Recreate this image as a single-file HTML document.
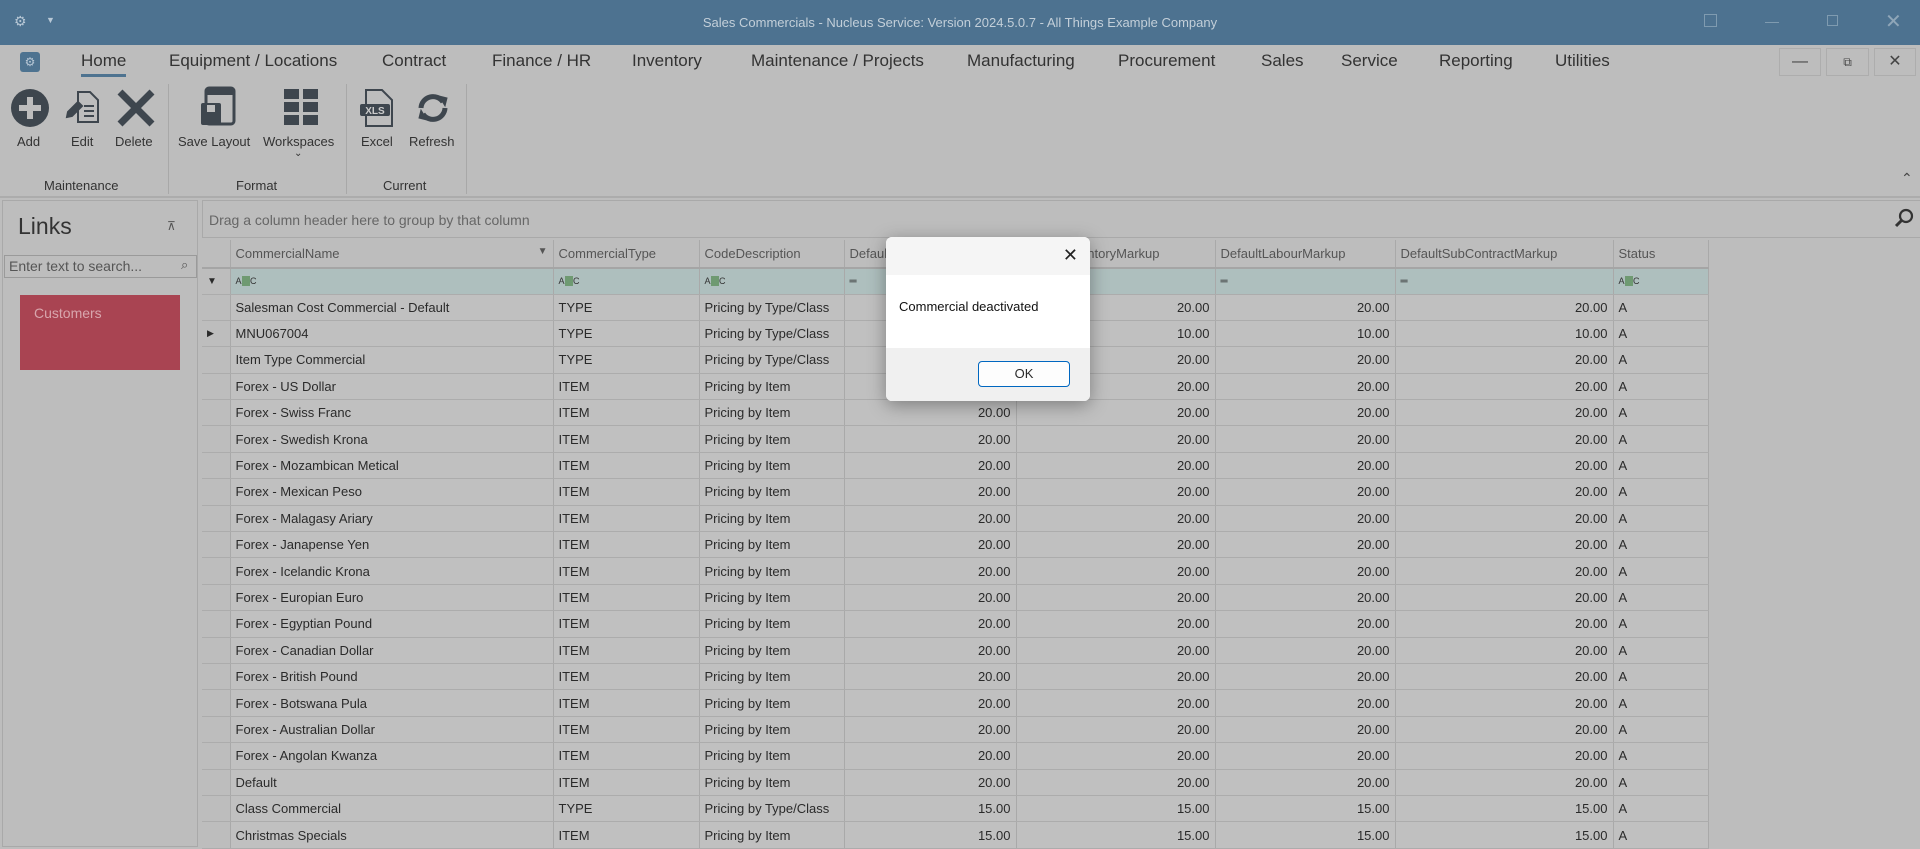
<!DOCTYPE html>
<html><head><meta charset="utf-8"><style>
*{box-sizing:border-box;margin:0;padding:0}
body{width:1920px;height:847px;overflow:hidden;background:#bdbdbd;font-family:"Liberation Sans",sans-serif;color:#2a2a2a;position:relative}
.abs{position:absolute}
.title{left:0;top:0;width:1920px;height:45px;background:#4d7290;color:#c3cfd9;font-size:13px;text-align:center;line-height:45px}
.tab{top:51px;font-size:17px;color:#333;white-space:nowrap}
.rb{font-size:13px;color:#333;text-align:center;white-space:nowrap}
.grp{top:178px;font-size:13px;color:#333}
.sep{width:1px;background:#a8a8a8;top:84px;height:110px}
table{border-collapse:collapse;position:absolute;left:202px;top:240px;font-size:13px}
td{height:26.4px;border-right:1px solid #a9a9a9;border-bottom:1px solid #acacac;padding:0 5px;white-space:nowrap;overflow:hidden;background:#c0c0c0}
tr.h td{height:28px;color:#555;background:#bdbdbd;border-bottom:2px solid #a5a5a5}
tr.f td{background:#aebfbe;height:26px;font-size:10px}
td.i{background:#bdbdbd;border-right:1px solid #a9a9a9}
td.n{text-align:right}
.abc{display:inline-block;font-size:9px;color:#333}
.abc b{background:#6f9a72;color:#6f9a72;padding:0 1px}
</style></head><body>
<div class="abs title">Sales Commercials - Nucleus Service: Version 2024.5.0.7 - All Things Example Company</div>
<div class="abs" style="left:14px;top:13px;color:#b8c8d6;font-size:14px">⚙</div>
<div class="abs" style="left:46px;top:15px;color:#b8c8d6;font-size:9px">▼</div>
<div class="abs" style="left:1704px;top:14px;width:13px;height:13px;border:1px solid #7f9bb0"></div>
<div class="abs" style="left:1765px;top:22px;width:14px;height:1px;background:#7f9bb0"></div>
<div class="abs" style="left:1827px;top:15px;width:11px;height:11px;border:1px solid #7f9bb0"></div>
<div class="abs" style="left:1885px;top:9px;color:#8fa6b8;font-size:20px">✕</div>
<div class="abs" style="left:20px;top:52px;width:20px;height:20px;background:#4e7390;border-radius:3px;color:#b8c8d6;font-size:12px;text-align:center;line-height:20px">⚙</div>
<div class="abs tab" style="left:81px">Home</div>
<div class="abs" style="left:81px;top:74px;width:45px;height:3px;background:#4e7390"></div>
<div class="abs tab" style="left:169px">Equipment / Locations</div>
<div class="abs tab" style="left:382px">Contract</div>
<div class="abs tab" style="left:492px">Finance / HR</div>
<div class="abs tab" style="left:632px">Inventory</div>
<div class="abs tab" style="left:751px">Maintenance / Projects</div>
<div class="abs tab" style="left:967px">Manufacturing</div>
<div class="abs tab" style="left:1118px">Procurement</div>
<div class="abs tab" style="left:1261px">Sales</div>
<div class="abs tab" style="left:1341px">Service</div>
<div class="abs tab" style="left:1439px">Reporting</div>
<div class="abs tab" style="left:1555px">Utilities</div>
<div class="abs" style="left:1779px;top:48px;width:42px;height:28px;border:1px solid #adadad;text-align:center;line-height:26px;color:#444">—</div>
<div class="abs" style="left:1826px;top:48px;width:43px;height:28px;border:1px solid #adadad;text-align:center;line-height:26px;color:#444;font-size:12px">⧉</div>
<div class="abs" style="left:1874px;top:48px;width:42px;height:28px;border:1px solid #adadad;text-align:center;line-height:26px;color:#444">✕</div>
<svg class="abs" style="left:10px;top:88px" width="40" height="40"><circle cx="20" cy="20" r="19" fill="#3e464e"/><rect x="17" y="9" width="6" height="22" fill="#bdbdbd"/><rect x="9" y="17" width="22" height="6" fill="#bdbdbd"/></svg>
<svg class="abs" style="left:64px;top:88px" width="40" height="40" fill="none" stroke="#3e464e" stroke-width="2"><path d="M14 4h12l8 8v22H14z"/><path d="M20 18h10M20 23h10M20 28h10"/><path d="M4 24l10-10 4 4-10 10-5 1z" fill="#3e464e"/></svg>
<svg class="abs" style="left:116px;top:88px" width="40" height="40"><path d="M4 4L36 36M36 4L4 36" stroke="#3e464e" stroke-width="7"/></svg>
<svg class="abs" style="left:198px;top:86px" width="40" height="42"><rect x="8" y="2" width="28" height="36" rx="3" fill="none" stroke="#3e464e" stroke-width="3"/><rect x="8" y="2" width="28" height="7" fill="#3e464e"/><rect x="3" y="17" width="20" height="22" rx="2" fill="#3e464e"/><rect x="9" y="19" width="8" height="7" fill="#bdbdbd"/></svg>
<svg class="abs" style="left:283px;top:88px" width="36" height="38" fill="#3e464e"><rect x="1" y="1" width="15" height="10"/><rect x="20" y="1" width="15" height="10"/><rect x="1" y="14" width="15" height="10"/><rect x="20" y="14" width="15" height="10"/><rect x="1" y="27" width="15" height="10"/><rect x="20" y="27" width="15" height="10"/></svg>
<svg class="abs" style="left:358px;top:88px" width="40" height="40"><path d="M8 2h16l10 10v26H8z" fill="none" stroke="#3e464e" stroke-width="2"/><rect x="2" y="16" width="30" height="12" rx="2" fill="#3e464e"/><text x="17" y="26" font-size="10" font-weight="bold" fill="#ccc" text-anchor="middle" font-family="Liberation Sans">XLS</text></svg>
<svg class="abs" style="left:413px;top:90px" width="40" height="36" fill="none" stroke="#3e464e" stroke-width="5"><path d="M8 18a12 12 0 0 1 22-6"/><path d="M32 18a12 12 0 0 1-22 6"/><path d="M26 6l8 2-2 8z" fill="#3e464e" stroke-width="1"/><path d="M14 30l-8-2 2-8z" fill="#3e464e" stroke-width="1"/></svg>
<div class="abs rb" style="left:17px;top:134px">Add</div>
<div class="abs rb" style="left:71px;top:134px">Edit</div>
<div class="abs rb" style="left:115px;top:134px">Delete</div>
<div class="abs rb" style="left:178px;top:134px">Save Layout</div>
<div class="abs rb" style="left:263px;top:134px">Workspaces</div>
<div class="abs rb" style="left:294px;top:148px;font-size:10px">⌄</div>
<div class="abs rb" style="left:361px;top:134px">Excel</div>
<div class="abs rb" style="left:409px;top:134px">Refresh</div>
<div class="abs grp" style="left:44px">Maintenance</div>
<div class="abs grp" style="left:236px">Format</div>
<div class="abs grp" style="left:383px">Current</div>
<div class="abs sep" style="left:168px"></div>
<div class="abs sep" style="left:346px"></div>
<div class="abs sep" style="left:466px"></div>
<div class="abs" style="left:1901px;top:170px;font-size:14px;color:#444">⌃</div>
<div class="abs" style="left:0;top:196px;width:1920px;height:2px;background:#acacac"></div>
<div class="abs" style="left:2px;top:200px;width:196px;height:647px;border:1px solid #a9a9a9;background:#bdbdbd"></div>
<div class="abs" style="left:18px;top:213px;font-size:23px;color:#333">Links</div>
<div class="abs" style="left:167px;top:219px;font-size:12px;color:#555">⊼</div>
<div class="abs" style="left:4px;top:255px;width:193px;height:23px;border:1px solid #9a9a9a;font-size:14px;color:#555;padding:2px 4px">Enter text to search...</div>
<div class="abs" style="left:181px;top:257px;font-size:13px;color:#555">⌕</div>
<div class="abs" style="left:20px;top:295px;width:160px;height:75px;background:#a94452;color:#d8a6ad;font-size:14px;padding:10px 14px">Customers</div>
<div class="abs" style="left:202px;top:200px;width:1718px;height:38px;border:1px solid #a9a9a9;border-right:none;font-size:14px;color:#666;padding:11px 6px">Drag a column header here to group by that column</div>
<svg class="abs" style="left:1893px;top:207px" width="22" height="22"><circle cx="13" cy="9" r="6" fill="none" stroke="#333" stroke-width="2.2"/><path d="M9 13L3 19" stroke="#333" stroke-width="3"/></svg>
<table>
<colgroup><col style="width:28px"><col style="width:323px"><col style="width:146px"><col style="width:145px"><col style="width:172px"><col style="width:199px"><col style="width:180px"><col style="width:218px"><col style="width:95px"></colgroup>
<tr class="h"><td class="i"></td><td>CommercialName<span style="float:right;font-size:10px">▼</span></td><td>CommercialType</td><td>CodeDescription</td><td>DefaultItemMarkup</td><td>DefaultInventoryMarkup</td><td>DefaultLabourMarkup</td><td>DefaultSubContractMarkup</td><td>Status</td></tr>
<tr class="f"><td class="i" style="background:#bdbdbd">▼</td><td><span class="abc">A<b>B</b>C</span></td><td><span class="abc">A<b>B</b>C</span></td><td><span class="abc">A<b>B</b>C</span></td><td>═</td><td>═</td><td>═</td><td>═</td><td><span class="abc">A<b>B</b>C</span></td></tr>
<tr><td class="i"></td><td>Salesman Cost Commercial - Default</td><td>TYPE</td><td>Pricing by Type/Class</td><td class="n">20.00</td><td class="n">20.00</td><td class="n">20.00</td><td class="n">20.00</td><td>A</td></tr>
<tr><td class="i" style="font-size:9px">▶</td><td>MNU067004</td><td>TYPE</td><td>Pricing by Type/Class</td><td class="n">10.00</td><td class="n">10.00</td><td class="n">10.00</td><td class="n">10.00</td><td>A</td></tr>
<tr><td class="i"></td><td>Item Type Commercial</td><td>TYPE</td><td>Pricing by Type/Class</td><td class="n">20.00</td><td class="n">20.00</td><td class="n">20.00</td><td class="n">20.00</td><td>A</td></tr>
<tr><td class="i"></td><td>Forex - US Dollar</td><td>ITEM</td><td>Pricing by Item</td><td class="n">20.00</td><td class="n">20.00</td><td class="n">20.00</td><td class="n">20.00</td><td>A</td></tr>
<tr><td class="i"></td><td>Forex - Swiss Franc</td><td>ITEM</td><td>Pricing by Item</td><td class="n">20.00</td><td class="n">20.00</td><td class="n">20.00</td><td class="n">20.00</td><td>A</td></tr>
<tr><td class="i"></td><td>Forex - Swedish Krona</td><td>ITEM</td><td>Pricing by Item</td><td class="n">20.00</td><td class="n">20.00</td><td class="n">20.00</td><td class="n">20.00</td><td>A</td></tr>
<tr><td class="i"></td><td>Forex - Mozambican Metical</td><td>ITEM</td><td>Pricing by Item</td><td class="n">20.00</td><td class="n">20.00</td><td class="n">20.00</td><td class="n">20.00</td><td>A</td></tr>
<tr><td class="i"></td><td>Forex - Mexican Peso</td><td>ITEM</td><td>Pricing by Item</td><td class="n">20.00</td><td class="n">20.00</td><td class="n">20.00</td><td class="n">20.00</td><td>A</td></tr>
<tr><td class="i"></td><td>Forex - Malagasy Ariary</td><td>ITEM</td><td>Pricing by Item</td><td class="n">20.00</td><td class="n">20.00</td><td class="n">20.00</td><td class="n">20.00</td><td>A</td></tr>
<tr><td class="i"></td><td>Forex - Janapense Yen</td><td>ITEM</td><td>Pricing by Item</td><td class="n">20.00</td><td class="n">20.00</td><td class="n">20.00</td><td class="n">20.00</td><td>A</td></tr>
<tr><td class="i"></td><td>Forex - Icelandic Krona</td><td>ITEM</td><td>Pricing by Item</td><td class="n">20.00</td><td class="n">20.00</td><td class="n">20.00</td><td class="n">20.00</td><td>A</td></tr>
<tr><td class="i"></td><td>Forex - Europian Euro</td><td>ITEM</td><td>Pricing by Item</td><td class="n">20.00</td><td class="n">20.00</td><td class="n">20.00</td><td class="n">20.00</td><td>A</td></tr>
<tr><td class="i"></td><td>Forex - Egyptian Pound</td><td>ITEM</td><td>Pricing by Item</td><td class="n">20.00</td><td class="n">20.00</td><td class="n">20.00</td><td class="n">20.00</td><td>A</td></tr>
<tr><td class="i"></td><td>Forex - Canadian Dollar</td><td>ITEM</td><td>Pricing by Item</td><td class="n">20.00</td><td class="n">20.00</td><td class="n">20.00</td><td class="n">20.00</td><td>A</td></tr>
<tr><td class="i"></td><td>Forex - British Pound</td><td>ITEM</td><td>Pricing by Item</td><td class="n">20.00</td><td class="n">20.00</td><td class="n">20.00</td><td class="n">20.00</td><td>A</td></tr>
<tr><td class="i"></td><td>Forex - Botswana Pula</td><td>ITEM</td><td>Pricing by Item</td><td class="n">20.00</td><td class="n">20.00</td><td class="n">20.00</td><td class="n">20.00</td><td>A</td></tr>
<tr><td class="i"></td><td>Forex - Australian Dollar</td><td>ITEM</td><td>Pricing by Item</td><td class="n">20.00</td><td class="n">20.00</td><td class="n">20.00</td><td class="n">20.00</td><td>A</td></tr>
<tr><td class="i"></td><td>Forex - Angolan Kwanza</td><td>ITEM</td><td>Pricing by Item</td><td class="n">20.00</td><td class="n">20.00</td><td class="n">20.00</td><td class="n">20.00</td><td>A</td></tr>
<tr><td class="i"></td><td>Default</td><td>ITEM</td><td>Pricing by Item</td><td class="n">20.00</td><td class="n">20.00</td><td class="n">20.00</td><td class="n">20.00</td><td>A</td></tr>
<tr><td class="i"></td><td>Class Commercial</td><td>TYPE</td><td>Pricing by Type/Class</td><td class="n">15.00</td><td class="n">15.00</td><td class="n">15.00</td><td class="n">15.00</td><td>A</td></tr>
<tr><td class="i"></td><td>Christmas Specials</td><td>ITEM</td><td>Pricing by Item</td><td class="n">15.00</td><td class="n">15.00</td><td class="n">15.00</td><td class="n">15.00</td><td>A</td></tr>
</table>
<div class="abs" style="left:886px;top:237px;width:204px;height:164px;border-radius:6px;overflow:hidden;box-shadow:0 4px 18px rgba(0,0,0,.35);background:#fff">
<div style="height:38px;background:#f5f5f5;position:relative"><span style="position:absolute;right:12px;top:8px;font-size:18px;color:#222">✕</span></div>
<div style="height:73px;background:#fff;font-size:13px;color:#111;padding:24px 13px">Commercial deactivated</div>
<div style="height:53px;background:#f0f0f0;position:relative"><div style="position:absolute;left:92px;top:13px;width:92px;height:26px;border:1px solid #0067c0;border-radius:4px;background:#fdfdfd;text-align:center;line-height:24px;font-size:13px">OK</div></div>
</div>
</body></html>
